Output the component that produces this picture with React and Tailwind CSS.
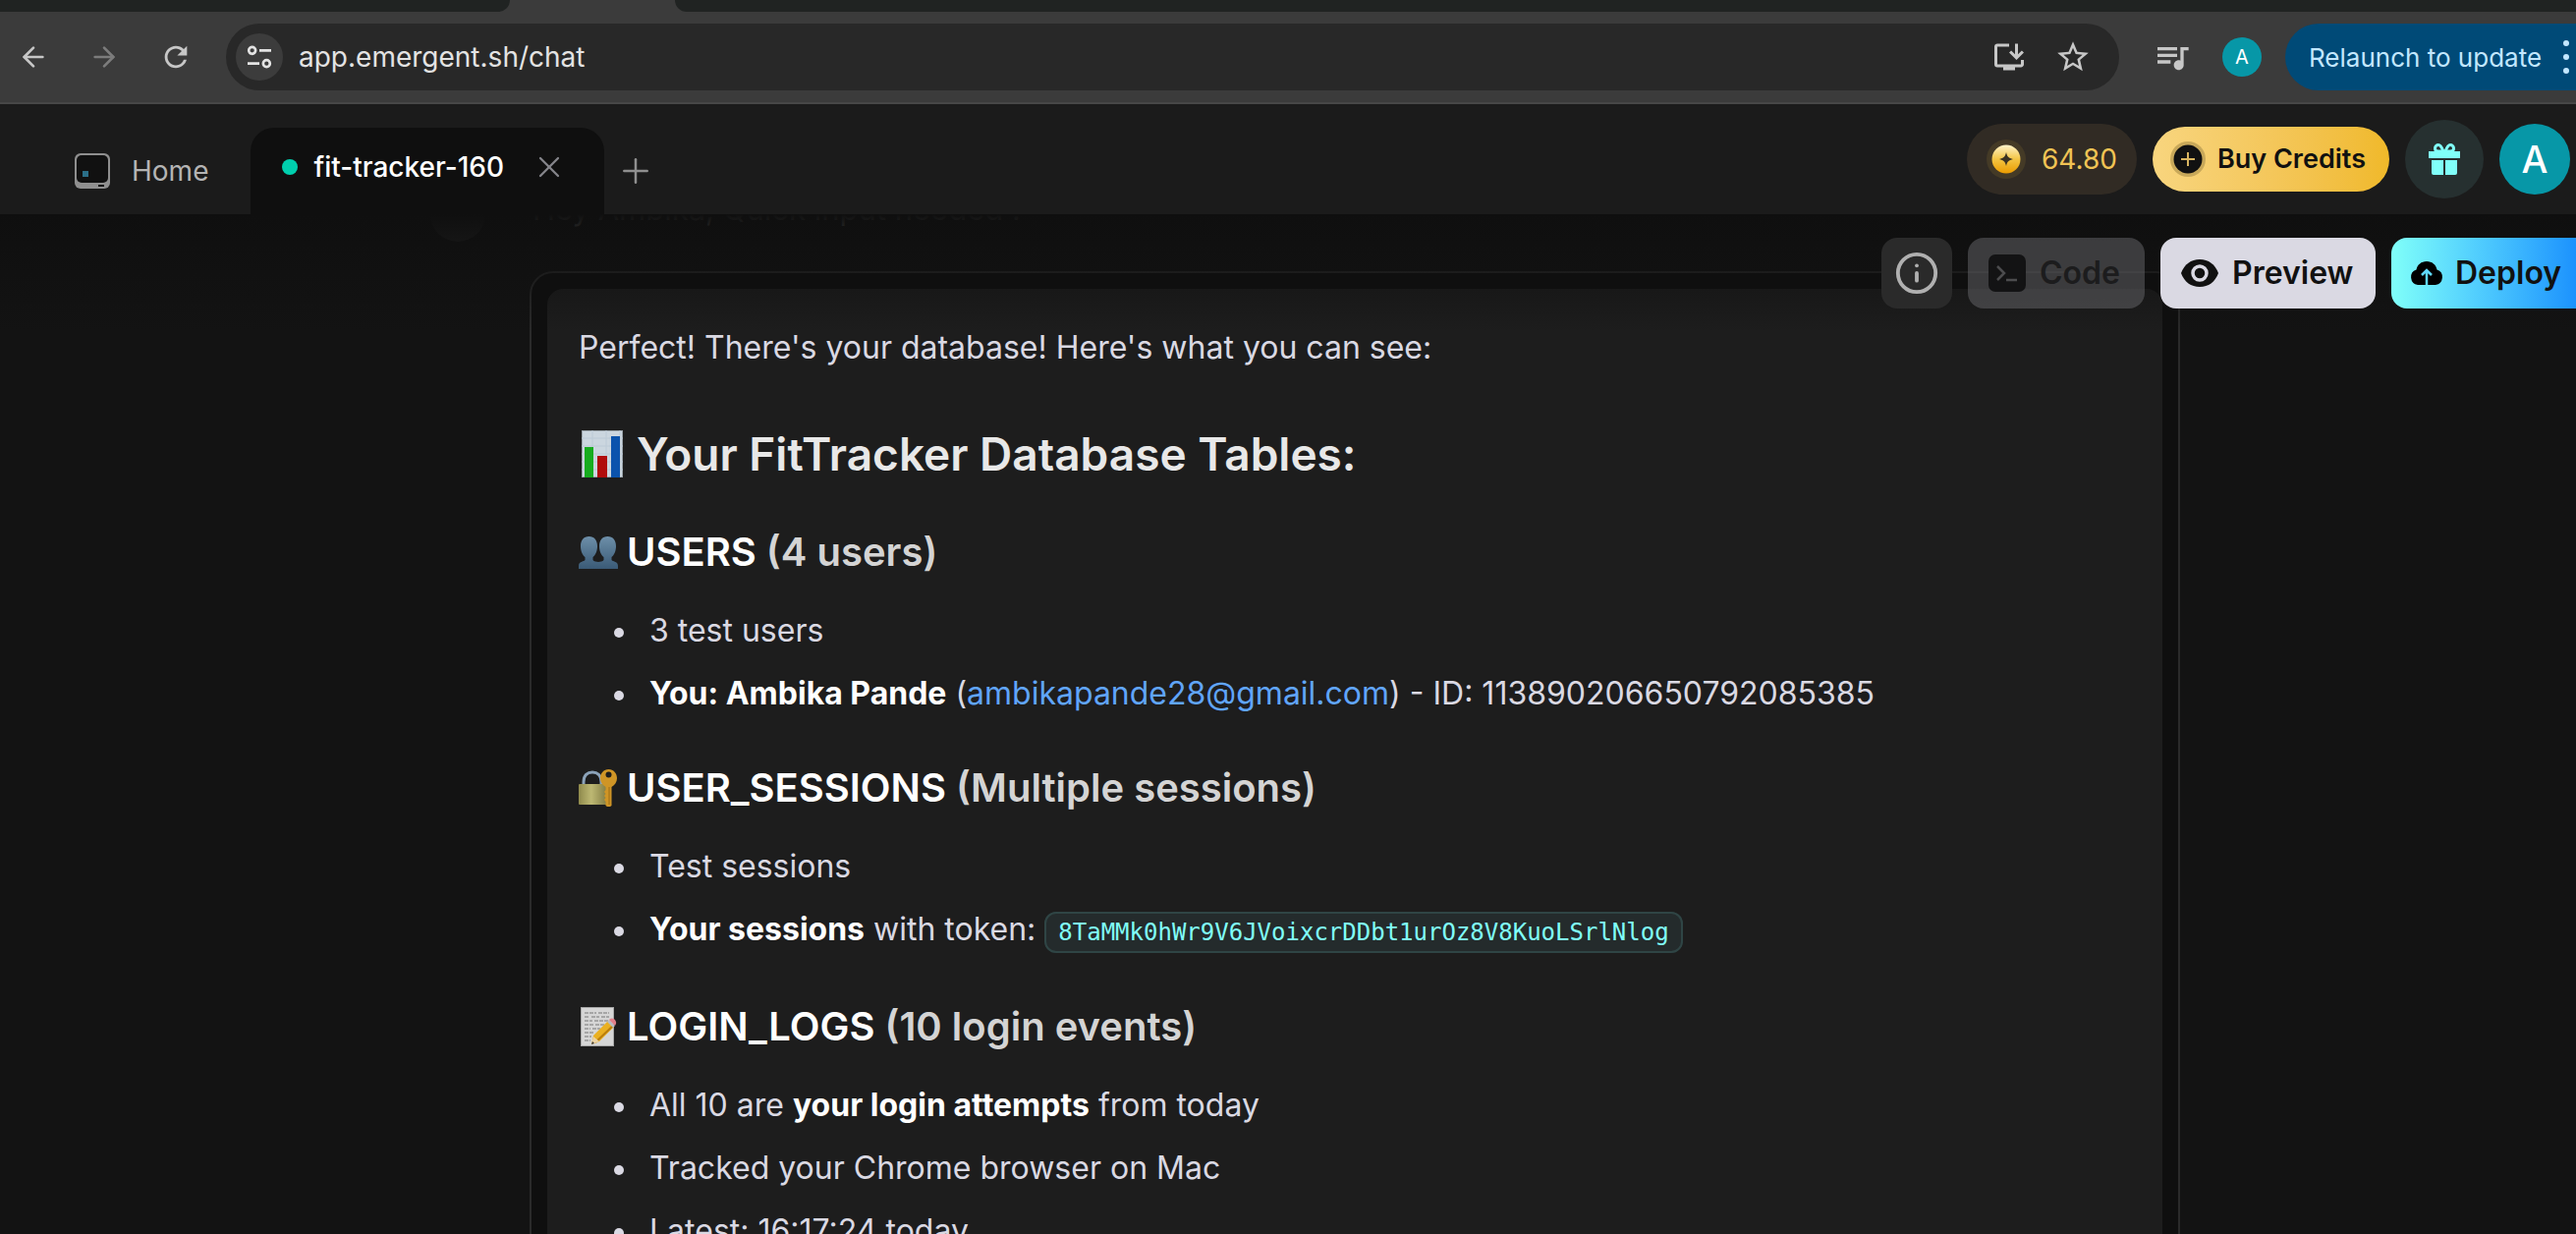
import { useState } from 'react';
import { ArrowLeft, ArrowRight, Info, Plus, X } from 'lucide-react';
import { MdInstallDesktop, MdQueueMusic, MdRefresh, MdStarBorder } from 'react-icons/md';

function TuneIcon() {
  return (
    <svg viewBox="0 0 24 24" className="size-8" fill="none" stroke="#e3e3e3" strokeWidth="2" aria-hidden="true">
      <circle cx="6.5" cy="7" r="2.6" />
      <path d="M12 7h9M3 17h9" />
      <circle cx="17.5" cy="17" r="2.6" />
    </svg>
  );
}

function HomeIcon() {
  return (
    <svg viewBox="0 0 36 36" className="size-9" aria-hidden="true">
      <rect width="36" height="36" rx="6" fill="#8f8f8f" />
      <rect x="2" y="2" width="32" height="28" rx="5" fill="#111" />
      <rect x="8" y="18" width="6" height="6" fill="#2b6f88" />
      <rect x="24" y="32" width="6" height="2" fill="#111" />
    </svg>
  );
}

function CoinIcon() {
  return (
    <svg viewBox="0 0 40 40" className="size-10" aria-hidden="true">
      <defs>
        <linearGradient id="coin" x1="0" y1="0" x2="0" y2="1">
          <stop offset="0" stopColor="#fff3c9" />
          <stop offset="0.5" stopColor="#f3c544" />
          <stop offset="1" stopColor="#ea9b00" />
        </linearGradient>
      </defs>
      <circle cx="20" cy="20" r="20" fill="#443a26" />
      <circle cx="20" cy="20" r="14.5" fill="url(#coin)" />
      <path d="M20 13c1 4.500 2.500 6 7 7-4.500 1-6 2.500-7 7-1-4.500-2.500-6-7-7 4.500-1 6-2.500 7-7z" fill="#3a3222" />
    </svg>
  );
}

function CirclePlusIcon() {
  return (
    <svg viewBox="0 0 36 36" className="size-9" aria-hidden="true">
      <circle cx="18" cy="18" r="18" fill="#c9a95a" />
      <circle cx="18" cy="18" r="14.500" fill="#111" />
      <path d="M18 11v14M11 18h14" stroke="#d9b561" strokeWidth="2" />
    </svg>
  );
}

function GiftIcon() {
  return (
    <svg viewBox="0 0 32 32" className="size-8" fill="#80fff9" aria-hidden="true">
      <path d="M0 8h32v7H0zM3 17h12v15H5a2 2 0 0 1-2-2zM17 17h12v13a2 2 0 0 1-2 2H17z" />
      <path d="M15 8C13 3 12 1.500 10 1.500S6.500 3 6.500 5 8 8 10 8zM17 8c2-5 3-6.500 5-6.500S25.500 3 25.500 5 24 8 22 8z" fill="none" stroke="#80fff9" strokeWidth="3" />
    </svg>
  );
}

function TerminalIcon() {
  return (
    <svg viewBox="0 0 38 38" className="size-[38px]" aria-hidden="true">
      <rect width="38" height="38" rx="7" fill="#131314" />
      <path d="M9 12l7 7-7 7M18 26h11" fill="none" stroke="#4c4c4e" strokeWidth="2.500" />
    </svg>
  );
}

function EyeIcon() {
  return (
    <svg viewBox="0 0 38 28" className="h-7 w-[38px]" aria-hidden="true">
      <path d="M19 0C10 0 3.500 5 0 14c3.500 9 10 14 19 14s15.500-5 19-14C34.500 5 28 0 19 0z" fill="#111" />
      <circle cx="19" cy="14" r="7" fill="#111" stroke="#dad9e3" strokeWidth="3.500" />
    </svg>
  );
}

function CloudUpIcon() {
  return (
    <svg viewBox="0 0 34 24" className="h-6 w-[34px]" aria-hidden="true">
      <path d="M8 24a8 8 0 0 1-1.500-15.500C7.500 3.500 11.500 0 17 0s9.500 3.500 10.500 8.500A8 8 0 0 1 26 24z" />
      <path d="M17 24V10M12 14l5-5 5 5" fill="none" stroke="#5fd8fb" strokeWidth="2.500" />
    </svg>
  );
}

function ChartEmoji() {
  return (
    <svg viewBox="0 0 42 48" className="h-12 w-[42px]" role="img" aria-label="Bar chart">
      <rect x="0.500" y="0.500" width="41" height="47" fill="#cbd6df" stroke="#9aa3aa" />
      <path d="M0 8h42M0 16h42M0 24h42M0 32h42M0 40h42M11 0v48M25 0v48M39 0v48" stroke="#bccad6" />
      <rect x="3" y="17" width="9" height="31" fill="#17ac1f" />
      <rect x="16" y="26" width="10" height="22" fill="#b00c0c" />
      <rect x="30" y="6" width="9" height="42" fill="#0b53ad" />
    </svg>
  );
}

function UsersEmoji() {
  return (
    <svg viewBox="0 0 40 33" className="h-[33px] w-10" role="img" aria-label="Users">
      <defs>
        <linearGradient id="bust" x1="0" y1="0" x2="0" y2="1">
          <stop offset="0" stopColor="#6d8fa9" />
          <stop offset="1" stopColor="#3a5a76" />
        </linearGradient>
      </defs>
      <path
        d="M10.500 0C5 0 2 4 2 10c0 5 2 9 4.500 11v3C5 26 0 25 0 30v3h40v-3c0-5-5-4-6.500-6v-3C36 19 38 15 38 10c0-6-3-10-8.500-10S21 4 21 10c0 5 2 9 4.500 11v3c-1 1.500-3.500 1.500-5.500 2-2-.5-4.500-.5-5.500-2v-3C17 19 19 15 19 10c0-6-3-10-8.500-10z"
        fill="url(#bust)"
      />
    </svg>
  );
}

function LockEmoji() {
  return (
    <svg viewBox="0 0 40 38" className="h-[38px] w-10" role="img" aria-label="Lock with key">
      <defs>
        <linearGradient id="lock" x1="0" y1="0" x2="1" y2="0">
          <stop offset="0" stopColor="#8f8a4c" />
          <stop offset="0.400" stopColor="#bdb873" />
          <stop offset="1" stopColor="#77713a" />
        </linearGradient>
      </defs>
      <path d="M5 17v-4C5 6 9 3 14 3s9 3 9 10v4" fill="none" stroke="#8ba2b8" strokeWidth="3" />
      <rect y="15" width="32" height="21" rx="1" fill="url(#lock)" />
      <path d="M30.500 0C25.500 0 22 4 22 9c0 4 2 7 5.500 9v3l-1.500 2 1.500 2-1.500 2 1.500 2-1.500 2 1.500 2v4l3 2 3-2V18c3.500-2 5.500-5 5.500-9 0-5-3.500-9-8.500-9z" fill="#cf9526" />
      <circle cx="30.500" cy="5.500" r="3" fill="#1d1d1d" />
      <path d="M31 18v18" stroke="#9c6c15" />
    </svg>
  );
}

function MemoEmoji() {
  return (
    <svg viewBox="0 0 40 40" className="size-10" role="img" aria-label="Memo">
      <rect x="2.500" y="0.500" width="33" height="39" fill="#d6d6d6" stroke="#a8a8a8" />
      <path d="M6 6h12M20 6h11M6 10h5M13 10h8M23 10h8M6 14h8M16 14h14M6 18h9M17 18h9M6 22h6M14 22h8M6 26h9M6 30h7M6 34h6" stroke="#777" strokeDasharray="4 1" />
      <path d="M13 38l2-9 15-15 6 6-15 15z" fill="#eab021" />
      <path d="M17 36l18-17" stroke="#b97d0c" strokeWidth="2" />
      <path d="M29 15l2-2 6 6-2 2z" fill="#b8bcc2" />
      <path d="M31 13l1-1c3-2 7 2 6 5l-1 2z" fill="#e3808a" />
      <path d="M13 38l2-8 6 5z" fill="#ecd3a4" />
      <path d="M13 38l1-3 2 2z" fill="#333" />
    </svg>
  );
}

function BrowserBar() {
  const [url, setUrl] = useState('app.emergent.sh/chat');

  return (
    <div className="bg-[#3b3b3b]">
      <div className="flex h-3">
        <div className="w-[519px] rounded-br-[12px] bg-[#202322]" />
        <div className="w-[168px]" />
        <div className="flex-1 rounded-bl-[12px] bg-[#202322]" />
      </div>
      <div className="flex h-[94px] items-center border-b-2 border-[#474747] text-[#c7c7c7]">
        <div className="flex w-[230px] shrink-0 items-center gap-10 pl-[18px]">
          <button aria-label="Back"><ArrowLeft size={32} strokeWidth={2} /></button>
          <button aria-label="Forward" className="text-[#7c7c7c]"><ArrowRight size={32} strokeWidth={2} /></button>
          <button aria-label="Reload"><MdRefresh size={34} /></button>
        </div>
        <div className="flex h-[68px] flex-1 items-center rounded-full bg-[#282828] pr-7 pl-[10px]">
          <button aria-label="Site information" className="flex size-12 items-center justify-center rounded-full bg-[#3c3c3c]">
            <TuneIcon />
          </button>
          <input
            aria-label="Address"
            value={url}
            onChange={(e) => setUrl(e.target.value)}
            className="ml-4 flex-1 bg-transparent text-[28px] text-[#e3e3e3] outline-none"
          />
          <button aria-label="Install app" className="mr-7"><MdInstallDesktop size={36} /></button>
          <button aria-label="Bookmark"><MdStarBorder size={38} /></button>
        </div>
        <button aria-label="Media controls" className="ml-[34px]"><MdQueueMusic size={40} /></button>
        <button aria-label="Browser profile" className="ml-[31px] size-10 rounded-full bg-[#0797a7] text-xl text-white">A</button>
        <button className="ml-6 flex h-[68px] w-[296px] shrink-0 items-center gap-[22px] rounded-l-full bg-[#004a77] pl-6 text-[26px] whitespace-nowrap text-[#c2e7ff]">
          Relaunch to update
          <span className="flex flex-col gap-2">
            <span className="size-[6px] rounded-full bg-[#c2e7ff]" />
            <span className="size-[6px] rounded-full bg-[#c2e7ff]" />
            <span className="size-[6px] rounded-full bg-[#c2e7ff]" />
          </span>
        </button>
      </div>
    </div>
  );
}

function AppHeader() {
  return (
    <header className="relative z-10 flex h-28 items-center bg-[#1b1b1b]">
      <a href="#home" className="flex items-center gap-[22px] pt-6 pl-[76px] text-[28px] text-[#b4b4b4]">
        <HomeIcon /> Home
      </a>
      <div className="ml-[43px] flex h-[88px] w-[360px] items-center self-end rounded-t-3xl bg-[#0f0f0f] pb-2 pl-8 text-[28px] font-medium text-white">
        <span className="size-4 rounded-full bg-[#00cfae]" />
        <span className="ml-4">fit-tracker-160</span>
        <button aria-label="Close tab" className="mr-[38px] ml-auto text-[#85858b]"><X size={36} strokeWidth={1.5} /></button>
      </div>
      <button aria-label="New tab" className="mt-6 ml-[12px] text-[#8f8f8f]"><Plus size={40} strokeWidth={1.5} /></button>
      <div className="ml-auto flex items-center gap-4 pr-[6px]">
        <div className="flex h-[72px] items-center gap-4 rounded-full bg-[#312b24] pr-5 pl-5 text-[28px] text-[#f0c354]">
          <CoinIcon /> 64.80
        </div>
        <button className="flex h-[66px] items-center gap-3 rounded-full bg-linear-to-r from-[#f8d57e] to-[#f0b929] pr-6 pl-[18px] text-[27px] font-semibold text-[#111]">
          <CirclePlusIcon /> Buy Credits
        </button>
        <button aria-label="Gifts" className="flex size-20 items-center justify-center rounded-full bg-[#263030]"><GiftIcon /></button>
        <button aria-label="Account" className="size-[72px] rounded-full bg-[#0797a7] text-[38px] font-medium text-white">A</button>
      </div>
    </header>
  );
}

function Toolbar() {
  return (
    <div className="absolute top-6 -right-4 z-20 flex items-center gap-4 text-[32px] font-semibold text-[#111]">
      <button aria-label="Information" className="flex size-[72px] items-center justify-center rounded-2xl bg-[#2a2a2a] text-[#b0b0b0]">
        <Info size={46} strokeWidth={2} />
      </button>
      <button disabled className="flex h-[72px] w-[180px] items-center gap-[14px] rounded-2xl bg-[#68686c]/50 pl-[21px] text-[#1c1c1d]">
        <TerminalIcon /> Code
      </button>
      <button className="flex h-[72px] w-[219px] items-center gap-[14px] rounded-2xl bg-[#dad9e3] pl-[21px]">
        <EyeIcon /> Preview
      </button>
      <button className="flex h-[72px] w-[204px] items-center gap-3 rounded-2xl bg-linear-to-r from-[#80fff9] to-[#1488fc] pl-[19px]">
        <CloudUpIcon /> Deploy
      </button>
    </div>
  );
}

function Section({ icon, title, note, children }) {
  return (
    <section className="mb-8">
      <h3 className="flex h-16 items-center gap-[9px] text-[40px] font-semibold text-[#d4d4d4]">
        {icon}
        <span><strong className="font-semibold text-white">{title}</strong> {note}</span>
      </h3>
      <ul className="mt-4 pl-9 leading-[64px]">{children}</ul>
    </section>
  );
}

function Item({ children }) {
  return (
    <li className="before:mr-[26px] before:inline-block before:size-[10px] before:rounded-full before:bg-[#dad9e3] before:align-middle before:content-['']">
      {children}
    </li>
  );
}

function Message() {
  return (
    <div className="mr-[403px] ml-[539px] h-[1100px] rounded-3xl border-2 border-[#2a2a2a] bg-[#0f0f0f] p-4">
      <article className="h-full rounded-2xl bg-[#1d1d1d] px-8 pt-8 text-[32px] text-[#dad9e3]">
        <p className="leading-[56px]">Perfect! There&apos;s your database! Here&apos;s what you can see:</p>
        <h2 className="mt-12 mb-9 flex h-16 items-center gap-[14px] pl-[3px] text-[46px] font-semibold text-[#e8e8e8]">
          <ChartEmoji /> Your FitTracker Database Tables:
        </h2>
        <Section icon={<UsersEmoji />} title="USERS" note="(4 users)">
          <Item>3 test users</Item>
          <Item>
            <strong className="font-bold text-white">You: Ambika Pande</strong> (
            <a href="mailto:ambikapande28@gmail.com" className="text-[#60a5fa]">ambikapande28@gmail.com</a>) - ID: 113890206650792085385
          </Item>
        </Section>
        <Section icon={<LockEmoji />} title="USER_SESSIONS" note="(Multiple sessions)">
          <Item>Test sessions</Item>
          <Item>
            <strong className="font-bold text-white">Your sessions</strong> with token:{' '}
            <code className="rounded-xl border-2 border-[#2f4545] bg-[#242b2c] px-3 py-[5px] font-['DejaVu_Sans_Mono',monospace] text-[24px] text-[#80fff9]">
              8TaMMk0hWr9V6JVoixcrDDbt1urOz8V8KuoLSrlNlog
            </code>
          </Item>
        </Section>
        <Section icon={<MemoEmoji />} title="LOGIN_LOGS" note="(10 login events)">
          <Item>All 10 are <strong className="font-bold text-white">your login attempts</strong> from today</Item>
          <Item>Tracked your Chrome browser on Mac</Item>
          <Item>Latest: 16:17:24 today</Item>
        </Section>
      </article>
    </div>
  );
}

export default function App() {
  return (
    <div className="flex h-screen flex-col overflow-hidden bg-[#131313] font-['Inter',sans-serif]">
      <BrowserBar />
      <AppHeader />
      <main className="relative min-h-0 flex-1 overflow-hidden">
        <div className="-mt-7 flex h-[86px] items-start gap-12 pl-[438px] text-[31px] text-[#b4b4b4]">
          <span className="size-14 rounded-full bg-[#2a2a2a]" />
          Hey Ambika, Quick input needed !
        </div>
        <Message />
        <div className="pointer-events-none absolute inset-x-0 top-0 h-30 bg-linear-to-b from-[#0f0f0f] to-transparent" />
        <Toolbar />
      </main>
    </div>
  );
}
